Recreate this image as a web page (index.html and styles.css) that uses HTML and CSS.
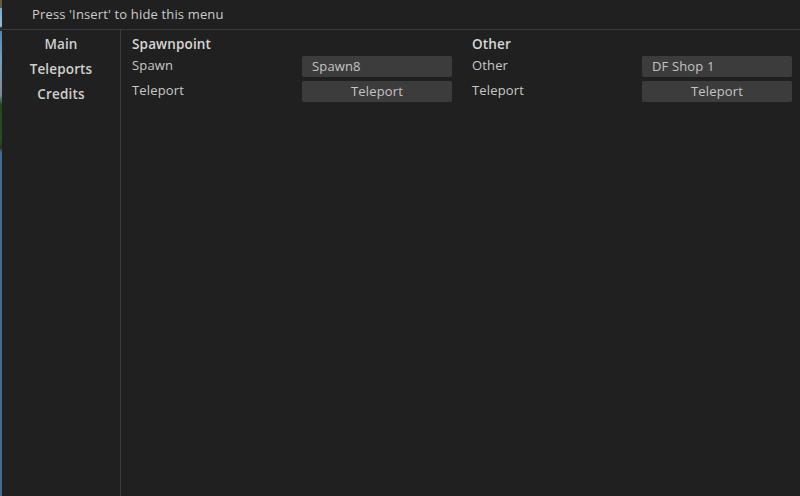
FILE: index.html
```html
<!DOCTYPE html>
<html>
<head>
<meta charset="utf-8">
<link rel="stylesheet" href="styles.css">
</head>
<body>
<div class="strip"></div>
<div class="menu">
  <div class="topbar">Press 'Insert' to hide this menu</div>
  <div class="main">
    <nav class="side">
      <div class="tab">Main</div>
      <div class="tab">Teleports</div>
      <div class="tab">Credits</div>
    </nav>
    <div class="content">
      <section class="group">
        <div class="title">Spawnpoint</div>
        <div class="row"><span class="label">Spawn</span><div class="field">Spawn8</div></div>
        <div class="row"><span class="label">Teleport</span><div class="field btn">Teleport</div></div>
      </section>
      <section class="group">
        <div class="title">Other</div>
        <div class="row"><span class="label">Other</span><div class="field">DF Shop 1</div></div>
        <div class="row"><span class="label">Teleport</span><div class="field btn">Teleport</div></div>
      </section>
    </div>
  </div>
</div>
</body>
</html>
```
FILE: styles.css
```css
html, body { margin: 0; padding: 0; }
body {
  width: 800px; height: 496px; overflow: hidden;
  display: flex;
  background: #202020;
  font-family: "Open Sans", "Noto Sans", sans-serif;
  color: #cfcfcf;
  letter-spacing: 0.15px;
}
.strip {
  width: 2px; flex: none;
  background: linear-gradient(to bottom,
    #6a5a3a 0px, #6a5a3a 8px,
    #6fa8d8 8px, #8ec0e6 26px,
    #3a2a20 28px, #3a2a20 31px,
    #4a88c0 31px, #6ea3c8 60px, #7a8a90 95px,
    #1d4a1a 105px, #1e5220 140px, #3a2a20 148px,
    #3a6d98 152px, #3a6d98 496px);
}
.menu { flex: 1; display: flex; flex-direction: column; }
.topbar {
  height: 30px; box-sizing: border-box;
  padding: 5px 0 0 30px;
  font-size: 13px; color: #cccccc;
  border-bottom: 1px solid #3b3b3b;
}
.main { flex: 1; display: flex; }
.side {
  width: 118px; flex: none;
  border-right: 1px solid #3b3b3b;
  padding-top: 5px;
  display: flex; flex-direction: column; align-items: center;
}
.tab { height: 25px; font-size: 13.5px; font-weight: 600; color: #cfcfcf; line-height: 19px; }
.content { flex: 1; display: flex; gap: 20px; padding: 5px 0 0 11px; }
.group { width: 320px; }
.title { height: 19px; font-size: 13.5px; font-weight: 600; color: #d6d6d6; line-height: 19px; }
.row { height: 25px; display: flex; align-items: center; justify-content: space-between; font-size: 13px; color: #c8c8c8; }
.row .label { margin-top: -3px; }
.field {
  width: 150px; height: 21px; box-sizing: border-box;
  background: #3c3c3c; border-radius: 2px;
  padding-left: 10px; line-height: 20px; font-size: 13px; color: #c4c4c4;
}
.btn { text-align: center; padding-left: 0; }
```
